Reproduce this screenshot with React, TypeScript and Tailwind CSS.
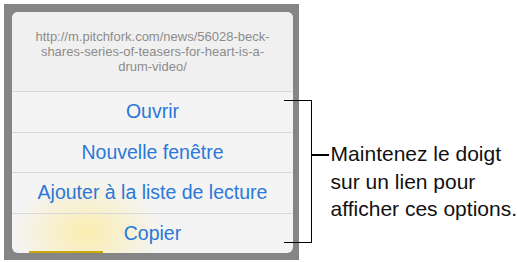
const actions = ["Ouvrir", "Nouvelle fenêtre", "Ajouter à la liste de lecture", "Copier"];

export default function App() {
  return (
    <div className="relative w-[517px] h-[262px] bg-white overflow-hidden font-['Liberation_Sans',Arial,sans-serif]">
      <div className="flex">
        {/* Phone screen */}
        <div className="ml-[4px] mt-[4px] w-[296px] h-[256px] bg-[#858585] pl-[8px] pt-[8px]">
          <div className="relative w-[281px] h-[241px] rounded-[6px] overflow-hidden bg-[#f4f4f4]">
            {/* yellow glow behind the blur */}
            <div className="absolute left-[0px] top-[165px] w-[150px] h-[110px] rounded-full bg-[radial-gradient(ellipse,rgba(255,232,130,0.6),rgba(255,240,190,0)_70%)]" />
            <div className="absolute left-[17px] bottom-0 w-[74px] h-[2px] bg-[#c9a90c]" />

            <div className="relative flex flex-col">
              <div className="h-[79px] flex items-center justify-center px-[20px] bg-[#f0f0f0]">
                <p className="text-center text-[13px] leading-[15px] text-[#8c8c8c]">
                  http://m.pitchfork.com/news/56028-beck-
                  <br />
                  shares-series-of-teasers-for-heart-is-a-
                  <br />
                  drum-video/
                </p>
              </div>
              {actions.map((a) => (
                <div
                  key={a}
                  className="h-[40.5px] border-t border-[#d9d9d9] flex items-center justify-center text-[19.5px] text-[#2a78d8]"
                >
                  {a}
                </div>
              ))}
            </div>
          </div>
        </div>

        {/* Callout text */}
        <p className="ml-[32px] mt-[140px] text-[21px] leading-[27.5px] text-[#111] whitespace-nowrap">
          Maintenez le doigt
          <br />
          sur un lien pour
          <br />
          afficher ces options.
        </p>
      </div>

      {/* Bracket */}
      <div className="absolute left-[284px] top-[100px] w-[28px] h-[143px] border-t-[1.5px] border-b-[1.5px] border-r-[1.5px] border-black" />
      <div className="absolute left-[312px] top-[154px] w-[17px] h-[1.5px] bg-black" />
    </div>
  );
}
